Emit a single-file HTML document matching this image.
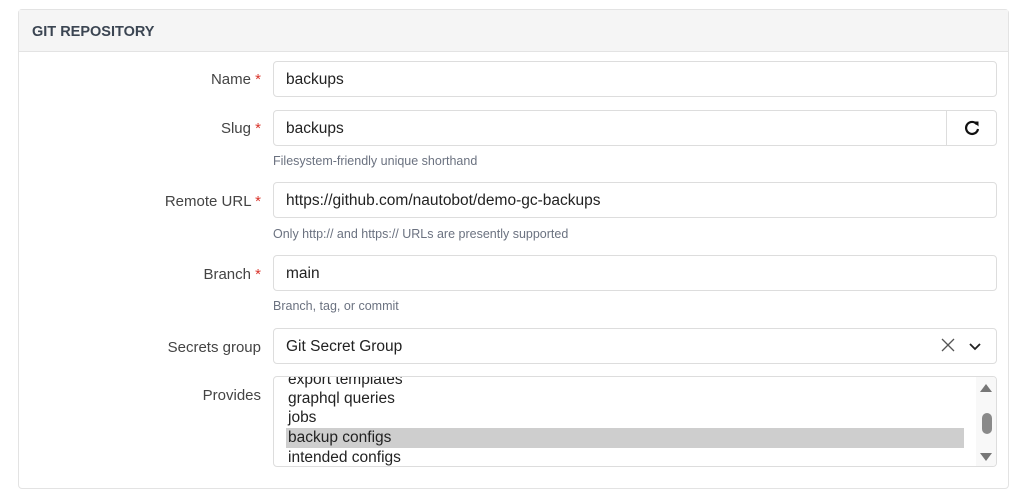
<!DOCTYPE html>
<html><head><style>
body{margin:0;background:#fff;font-family:"Liberation Sans",sans-serif;width:1024px;height:500px;overflow:hidden;position:relative}
.panel{position:absolute;left:18px;top:9px;width:991px;height:480px;border:1px solid #e3e3e3;border-radius:4px;box-sizing:border-box}
.hd{height:42px;background:#f5f5f5;border-bottom:1px solid #e3e3e3;box-sizing:border-box;font-weight:bold;font-size:14.5px;color:#3b4552;padding:14px 0 0 13px}
.lbl{position:absolute;right:763px;font-size:15px;color:#444;text-align:right}
.lbl b{color:#d9342b;font-weight:normal}
.in{position:absolute;left:273px;width:724px;height:36px;border:1px solid #ddd;border-radius:4px;box-sizing:border-box;font-size:15.5px;color:#222;padding:9px 12px}
.help{position:absolute;left:273px;font-size:12.5px;color:#6b7280}
.opt{position:absolute;left:14px;font-size:15.5px;color:#222}
</style></head><body>
<div class="panel"><div class="hd">GIT REPOSITORY</div></div>
<div class="lbl" style="top:71px">Name <b>*</b></div>
<div class="in" style="top:61px">backups</div>
<div class="lbl" style="top:120px">Slug <b>*</b></div>
<div class="in" style="top:110px;width:674px;border-radius:4px 0 0 4px">backups</div>
<div style="position:absolute;left:946px;top:110px;width:51px;height:36px;border:1px solid #ddd;border-radius:0 4px 4px 0;box-sizing:border-box">
<svg width="20" height="20" viewBox="0 0 20 20" style="position:absolute;left:15px;top:7px"><path d="M15 6.5A6 6 0 1 0 16 11" fill="none" stroke="#111" stroke-width="2.2"/><path d="M11.5 3.5L16.5 3.5L16.5 8.5Z" fill="#111"/></svg></div>
<div class="help" style="top:154px">Filesystem-friendly unique shorthand</div>
<div class="lbl" style="top:193px">Remote URL <b>*</b></div>
<div class="in" style="top:182px">https://github.com/nautobot/demo-gc-backups</div>
<div class="help" style="top:227px">Only http:// and https:// URLs are presently supported</div>
<div class="lbl" style="top:266px">Branch <b>*</b></div>
<div class="in" style="top:255px">main</div>
<div class="help" style="top:299px">Branch, tag, or commit</div>
<div class="lbl" style="top:339px">Secrets group</div>
<div class="in" style="top:328px">Git Secret Group
<svg width="16" height="16" viewBox="0 0 16 16" style="position:absolute;left:666px;top:8px"><path d="M2 2L14 14M14 2L2 14" stroke="#555" stroke-width="1.3"/></svg>
<svg width="14" height="10" viewBox="0 0 14 10" style="position:absolute;left:694px;top:13px"><path d="M2 2L7 7L12 2" fill="none" stroke="#222" stroke-width="1.8"/></svg></div>
<div class="lbl" style="top:387px">Provides</div>
<div style="position:absolute;left:273px;top:376px;width:724px;height:91px;border:1px solid #ddd;border-radius:4px;box-sizing:border-box;overflow:hidden">
<div style="position:absolute;left:12px;top:51px;width:678px;height:20px;background:#cecece"></div>
<div class="opt" style="top:-6px">export templates</div>
<div class="opt" style="top:13px">graphql queries</div>
<div class="opt" style="top:32px">jobs</div>
<div class="opt" style="top:52px">backup configs</div>
<div class="opt" style="top:72px">intended configs</div>
<div style="position:absolute;right:0;top:0;width:20px;height:89px;background:#f8f8f8">
<div style="position:absolute;left:4px;top:7px;border:6px solid transparent;border-bottom:8px solid #777;border-top:0"></div>
<div style="position:absolute;left:6px;top:36px;width:10px;height:21px;background:#8a8a8a;border-radius:5px"></div>
<div style="position:absolute;left:4px;top:76px;border:6px solid transparent;border-top:8px solid #777;border-bottom:0"></div>
</div></div>
</body></html>
